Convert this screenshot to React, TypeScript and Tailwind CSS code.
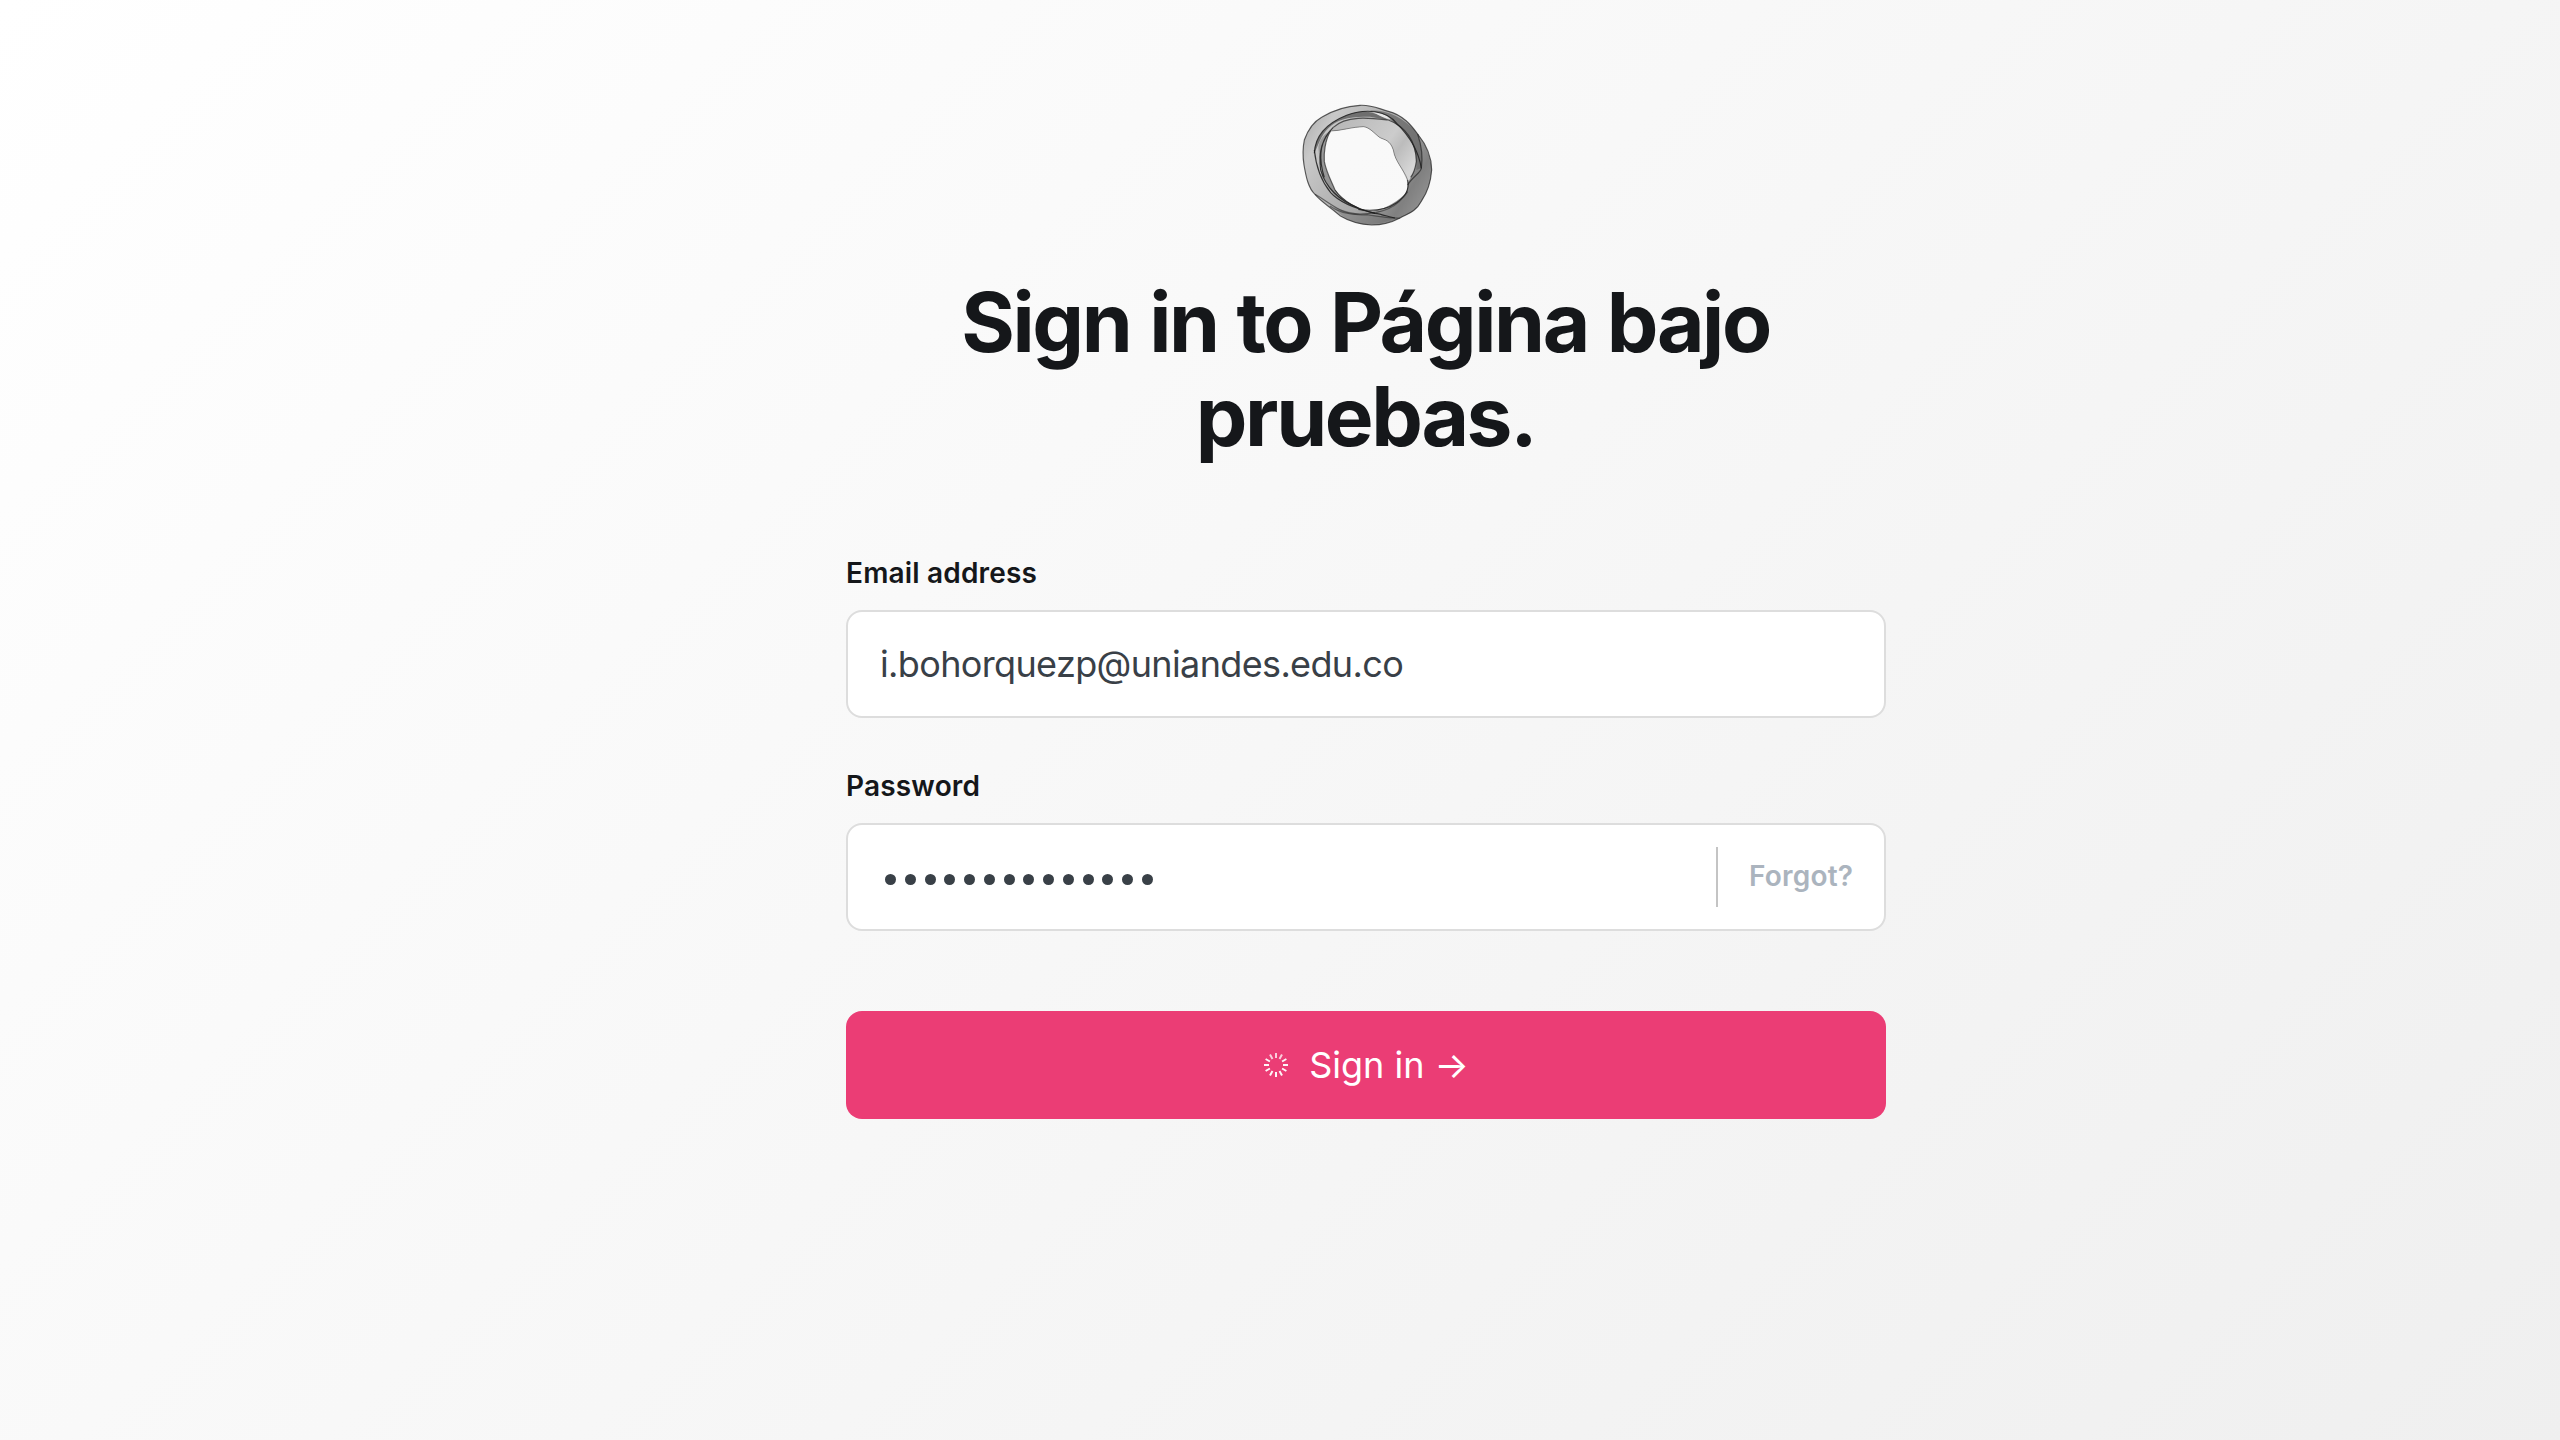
import React from "react";

const rays = Array.from({ length: 12 }, (_, i) => i * 30);

function Spinner() {
  return (
    <svg className="h-6 w-6" viewBox="0 0 24 24" stroke="#fff" strokeWidth="2">
      {rays.map((a) => (
        <line key={a} x1="12" y1="0" x2="12" y2="5" transform={`rotate(${a} 12 12)`} opacity={a === 0 || a === 30 || a === 330 ? 0.75 : 0.95} />
      ))}
    </svg>
  );
}

function Logo() {
  return (
    <svg className="mr-[2px] h-[150px] w-[170px]" viewBox="0 0 510 450" fill="none">
      <defs>
        <linearGradient id="band" x1="70" y1="100" x2="450" y2="330" gradientUnits="userSpaceOnUse">
          <stop offset="0" stopColor="#b0b0b0" />
          <stop offset="0.15" stopColor="#c8c8c8" />
          <stop offset="0.6" stopColor="#a8a8a8" />
          <stop offset="0.85" stopColor="#808080" />
          <stop offset="1" stopColor="#939393" />
        </linearGradient>
        <linearGradient id="inner" x1="180" y1="90" x2="390" y2="240" gradientUnits="userSpaceOnUse">
          <stop offset="0" stopColor="#b8b8b8" />
          <stop offset="0.6" stopColor="#cccccc" />
          <stop offset="0.75" stopColor="#bcbcbc" />
          <stop offset="1" stopColor="#d6d6d6" />
        </linearGradient>
      </defs>
      <path
        fillRule="evenodd"
        fill="url(#band)"
        d="M240 46C275 44 295 56 325 64C370 75 395 108 413 132C440 165 455 205 455 240C452 280 440 310 425 332C405 370 378 372 360 384C330 400 300 405 275 405C235 403 205 392 180 377C150 350 125 337 105 313C85 295 78 260 72 225C68 200 68 175 73 150C82 125 98 97 125 82C160 60 200 48 240 46ZM152 123C135 150 131 190 133 215C140 250 155 275 165 300C190 335 225 353 258 362C300 365 340 345 375 312C384 300 385 285 383 270C370 235 345 215 340 180C330 150 315 150 300 143C282 130 270 112 250 110C220 110 180 123 152 123Z"
      />
      <path fill="url(#inner)" d="M152 123C180 90 250 75 330 90C375 115 410 160 410 215C405 245 390 265 383 280C370 235 345 215 340 180C330 150 315 150 300 143C282 130 270 112 250 110C220 110 180 123 152 123Z" />
      <path fill="#555" fillOpacity=".75" d="M103 190C105 140 140 100 200 76C240 60 270 58 325 90L270 80C220 80 180 84 155 106C125 130 120 155 103 190Z" />
      <path fill="#666" fillOpacity=".75" d="M270 62C320 60 370 80 413 132C425 180 430 210 423 235L409 240C412 180 390 130 350 105C325 80 300 68 270 62Z" />
      <path fill="#777" fillOpacity=".55" d="M115 170C118 220 130 275 165 318C190 345 230 358 258 362C225 353 190 335 165 300C155 275 140 250 133 215C131 190 135 150 152 123C135 130 120 145 115 170Z" />
      <path fill="#e6e6e6" d="M277 66C300 66 320 75 332 88C310 84 295 74 277 66Z" />
      <path fill="#bdbdbd" fillOpacity=".8" d="M290 360C330 354 360 335 380 305C380 320 350 348 310 362Z" />
      <path fill="#666" fillOpacity=".4" d="M160 350C220 375 280 375 345 384C310 402 280 404 240 400C205 392 185 380 160 350Z" />
      <g stroke="#1c1c1c" strokeWidth="3.5" strokeOpacity=".85" strokeLinejoin="round">
        <path strokeOpacity=".7" d="M240 46C275 44 295 56 325 64C370 75 395 108 413 132C440 165 455 205 455 240C452 280 440 310 425 332C405 370 378 372 360 384C330 400 300 405 275 405C235 403 205 392 180 377C150 350 125 337 105 313C85 295 78 260 72 225C68 200 68 175 73 150C82 125 98 97 125 82C160 60 200 48 240 46Z" />
        <path strokeOpacity=".5" strokeWidth="2.5" d="M152 123C180 123 220 110 250 110C270 112 282 130 300 143C315 150 330 150 340 180C345 215 370 235 383 270" />
        <path d="M152 123C135 150 131 190 133 215C140 250 155 275 165 300" strokeOpacity=".65" />
        <path d="M165 300C190 335 230 357 285 370" />
        <path d="M103 190C105 140 140 100 200 76C255 55 320 60 350 100C380 130 415 175 424 235" />
        <path d="M103 180C108 230 125 275 152 308C180 340 230 357 285 370C305 372 330 382 345 384" />
        <path d="M160 112C200 75 270 84 325 90C375 108 410 155 409 215C405 240 398 255 392 262" strokeOpacity=".7" />
        <path d="M122 240C115 190 125 145 160 112M133 262C118 215 118 165 145 130M122 240C135 285 170 328 235 354" />
        <path d="M383 270C388 300 378 318 350 338C315 362 275 364 235 358" />
        <path d="M105 313C160 345 180 372 240 372C310 372 355 350 383 305" strokeOpacity=".55" />
        <path d="M383 285C395 262 421 250 424 235C430 195 424 165 413 132" strokeOpacity=".65" />
        <path d="M150 348C180 372 220 376 262 374C300 380 335 386 360 384" strokeOpacity=".5" />
      </g>
    </svg>
  );
}

export default function App() {
  return (
    <div className="h-[1440px] w-full overflow-hidden bg-[#efefef] font-['Inter',sans-serif]">
      <div className="flex h-[1536px] w-[2732px] flex-col items-center bg-[linear-gradient(135deg,#ffffff,#eeeeee)]">
        <main className="flex w-[1040px] flex-col pt-[90px]">
          <header className="flex flex-col items-center">
            <Logo />
            <h1 className="mt-[36px] mr-px text-center text-[82px] leading-[94px] font-bold tracking-[-0.029em] text-[#15171a] [word-spacing:1.7px]">
              Sign in to Página bajo
              <br />
              pruebas.
            </h1>
          </header>
          <form className="flex flex-col">
            <label className="mt-[91px] h-[43px] text-[28px] leading-[36px] font-semibold tracking-[0.18px] text-[#15171a]">Email address</label>
            <div className="mt-3 flex h-[108px] items-center rounded-2xl border-2 border-[#dddddd] bg-white px-8 text-[36px] tracking-[-0.64px] text-[#394047]">
              i.bohorquezp@uniandes.edu.co
            </div>
            <label className="mt-[50px] h-[43px] text-[28px] leading-[36px] font-semibold tracking-[0.18px] text-[#15171a]">Password</label>
            <div className="mt-3 flex h-[108px] items-center rounded-2xl border-2 border-[#dddddd] bg-white pr-[30px] pl-[37px]">
              <div className="flex flex-1 gap-[8.77px] pt-[5px]">
                {Array.from({ length: 14 }, (_, i) => (
                  <span key={i} className="h-[11px] w-[11px] rounded-full bg-[#394047]" />
                ))}
              </div>
              <div className="flex h-[60px] w-[138px] items-center border-l-2 border-[#c4c4c4] pb-[3px] pl-[31px] text-[28px] font-semibold tracking-[0.2px] text-[#abb4be]">Forgot?</div>
            </div>
            <button type="button" className="mt-20 flex h-[108px] items-center justify-center rounded-2xl bg-[#eb3d75] pl-px text-[36px] text-white">
              <Spinner />
              <span className="ml-[21px]">Sign in →</span>
            </button>
          </form>
        </main>
      </div>
    </div>
  );
}
